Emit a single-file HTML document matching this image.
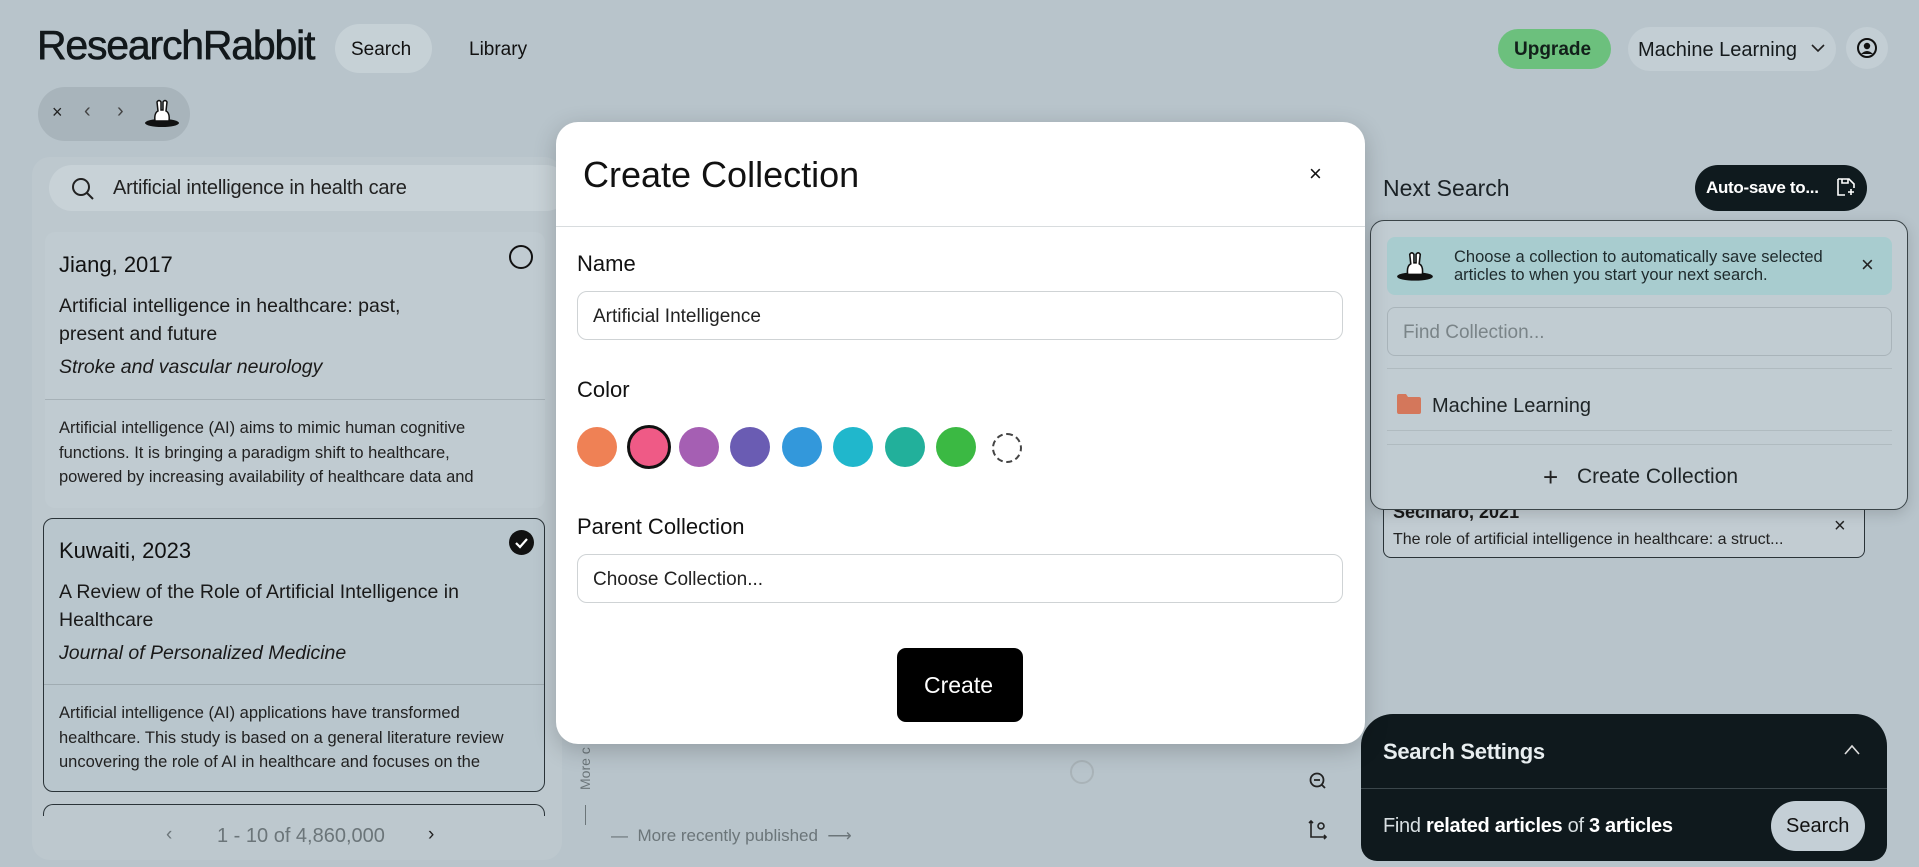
<!DOCTYPE html>
<html><head><meta charset="utf-8"><style>
*{box-sizing:border-box;margin:0;padding:0}
body{width:1919px;height:867px;overflow:hidden;background:#b8c4cb;font-family:"Liberation Sans",sans-serif;color:#111;position:relative}
.a{position:absolute}
.t{white-space:nowrap}
</style></head><body>
<!-- header -->
<div class="a t" style="left:37px;top:22px;font-size:41px;letter-spacing:-1.2px;color:#12181b;font-weight:500;-webkit-text-stroke:0.6px #12181b">ResearchRabbit</div>
<div class="a" style="left:335px;top:24px;width:97px;height:49px;border-radius:25px;background:#c6d1d6"></div>
<div class="a t" style="left:351px;top:39px;font-size:19px;font-weight:500">Search</div>
<div class="a t" style="left:469px;top:39px;font-size:19px;font-weight:500">Library</div>
<div class="a" style="left:38px;top:87px;width:152px;height:54px;border-radius:27px;background:#a8b4bb"></div>
<div class="a t" style="left:52px;top:102px;font-size:18px;color:#222">×</div>
<div class="a t" style="left:84px;top:100px;font-size:20px;color:#444">‹</div>
<div class="a t" style="left:117px;top:100px;font-size:20px;color:#444">›</div>
<svg class="a" style="left:143px;top:99px" width="38" height="30" viewBox="0 0 38 30"><ellipse cx="19" cy="24" rx="17" ry="4" fill="#111"/><path d="M12 22 Q11 14 15 12 L14 3 Q16 0 18 3 L18 11 L20 11 L20 3 Q22 0 24 3 L23 12 Q27 14 26 22Z" fill="#fff" stroke="#111" stroke-width="1.5"/></svg>

<div class="a" style="left:1498px;top:29px;width:113px;height:40px;border-radius:20px;background:#6cc07d"></div>
<div class="a t" style="left:1514px;top:39px;font-size:19px;font-weight:600;color:#12201a">Upgrade</div>
<div class="a" style="left:1628px;top:27px;width:208px;height:44px;border-radius:22px;background:#c3ced4"></div>
<div class="a t" style="left:1638px;top:39px;font-size:20px;color:#151a1c">Machine Learning</div>
<svg class="a" style="left:1810px;top:42px" width="16" height="12"><path d="M2 3 L8 9 L14 3" fill="none" stroke="#222" stroke-width="1.6"/></svg>
<div class="a" style="left:1846px;top:27px;width:42px;height:42px;border-radius:21px;background:#c3ced4"></div>
<svg class="a" style="left:1856px;top:37px" width="22" height="22" viewBox="0 0 22 22"><circle cx="11" cy="11" r="9" fill="none" stroke="#111" stroke-width="2"/><circle cx="11" cy="9" r="3.2" fill="#111"/><path d="M5 17 Q11 11 17 17" fill="#111"/></svg>

<!-- left panel -->
<div class="a" style="left:32px;top:157px;width:530px;height:703px;border-radius:18px;background:#bdc8ce"></div>
<div class="a" style="left:49px;top:165px;width:520px;height:46px;border-radius:23px;background:#c8d2d7"></div>
<svg class="a" style="left:70px;top:176px" width="26" height="26"><circle cx="11" cy="11" r="8" fill="none" stroke="#222" stroke-width="2"/><path d="M17 17 L23 23" stroke="#222" stroke-width="2"/></svg>
<div class="a t" style="left:113px;top:177px;font-size:20px;color:#222;letter-spacing:-0.2px">Artificial intelligence in health care</div>

<div class="a" style="left:45px;top:232px;width:500px;height:276px;border-radius:10px;background:#c0cbd1"></div>
<div class="a t" style="left:59px;top:252px;font-size:22px">Jiang, 2017</div>
<div class="a" style="left:509px;top:245px;width:24px;height:24px;border-radius:12px;border:2px solid #111"></div>
<div class="a" style="left:59px;top:292px;font-size:19.5px;line-height:28px;width:460px;color:#1a1a1a">Artificial intelligence in healthcare: past,<br>present and future</div>
<div class="a t" style="left:59px;top:356px;font-size:19.5px;font-style:italic;color:#1a1a1a">Stroke and vascular neurology</div>
<div class="a" style="left:45px;top:399px;width:500px;height:1px;background:#a6b1b7"></div>
<div class="a" style="left:59px;top:416px;font-size:16.5px;line-height:24.5px;color:#222;width:480px;white-space:nowrap">Artificial intelligence (AI) aims to mimic human cognitive<br>functions. It is bringing a paradigm shift to healthcare,<br>powered by increasing availability of healthcare data and</div>

<div class="a" style="left:43px;top:518px;width:502px;height:274px;border-radius:10px;background:#b9c6cd;border:1.5px solid #2a3338"></div>
<div class="a t" style="left:59px;top:538px;font-size:22px">Kuwaiti, 2023</div>
<div class="a" style="left:509px;top:530px;width:25px;height:25px;border-radius:13px;background:#111"></div>
<svg class="a" style="left:509px;top:530px" width="25" height="25"><path d="M7 13 L11 17 L18 9" fill="none" stroke="#fff" stroke-width="2.2"/></svg>
<div class="a" style="left:59px;top:578px;font-size:19.5px;line-height:28px;color:#1a1a1a;white-space:nowrap">A Review of the Role of Artificial Intelligence in<br>Healthcare</div>
<div class="a t" style="left:59px;top:642px;font-size:19.5px;font-style:italic;color:#1a1a1a">Journal of Personalized Medicine</div>
<div class="a" style="left:44px;top:684px;width:500px;height:1px;background:#a0acb2"></div>
<div class="a" style="left:59px;top:701px;font-size:16.5px;line-height:24.5px;color:#222;white-space:nowrap">Artificial intelligence (AI) applications have transformed<br>healthcare. This study is based on a general literature review<br>uncovering the role of AI in healthcare and focuses on the</div>
<div class="a" style="left:43px;top:804px;width:502px;height:12px;border-radius:10px 10px 0 0;border:1.5px solid #2a3338;border-bottom:none;overflow:hidden"></div>
<div class="a t" style="left:166px;top:824px;font-size:19px;color:#6b7579">‹</div>
<div class="a t" style="left:217px;top:825px;font-size:20px;color:#6b7579">1 - 10 of 4,860,000</div>
<div class="a t" style="left:428px;top:824px;font-size:19px;color:#222">›</div>

<!-- graph area bits -->
<div class="a t" style="left:611px;top:826px;font-size:17px;color:#6b7579">— &nbsp;More recently published &nbsp;⟶</div>
<div class="a" style="left:585px;top:805px;width:1px;height:20px;background:#6b7579"></div>
<div class="a t" style="left:577px;top:790px;font-size:14px;color:#6b7579;transform:rotate(-90deg);transform-origin:left top">More c</div>
<div class="a" style="left:1070px;top:760px;width:24px;height:24px;border-radius:12px;border:2px solid #a9b3b8"></div>
<svg class="a" style="left:1308px;top:771px" width="20" height="20"><circle cx="9" cy="9" r="6.5" fill="none" stroke="#222" stroke-width="1.8"/><path d="M6 9 H12 M14 14 L17 17" stroke="#222" stroke-width="1.8"/></svg>
<svg class="a" style="left:1308px;top:819px" width="20" height="22"><path d="M3 2 V18 H18 M1 4 L3 2 L5 4 M16 16 L18 18 L16 20" fill="none" stroke="#222" stroke-width="1.6"/><circle cx="13" cy="7" r="3" fill="none" stroke="#222" stroke-width="1.6"/></svg>

<!-- right side -->
<div class="a t" style="left:1383px;top:175px;font-size:23px;font-weight:500;color:#1b2226">Next Search</div>
<div class="a" style="left:1695px;top:165px;width:172px;height:46px;border-radius:23px;background:#0f1a1e"></div>
<div class="a t" style="left:1706px;top:178px;font-size:17px;font-weight:600;color:#fff;letter-spacing:-0.3px">Auto-save to...</div>
<svg class="a" style="left:1835px;top:176px" width="22" height="22"><path d="M3 3 H14 L19 8 V12 M3 3 V19 H10 M7 3 V7 H13 V3" fill="none" stroke="#fff" stroke-width="1.6"/><path d="M16 13 V19 M13 16 H19" stroke="#fff" stroke-width="1.6"/></svg>

<div class="a" style="left:1383px;top:500px;width:482px;height:58px;border-radius:8px;background:#c2ccd2;border:1.5px solid #2a3338"></div>
<div class="a t" style="left:1393px;top:502px;font-size:18px;font-weight:600;color:#1a1a1a">Secinaro, 2021</div>
<div class="a t" style="left:1393px;top:531px;font-size:16px;color:#222">The role of artificial intelligence in healthcare: a struct...</div>
<div class="a t" style="left:1834px;top:515px;font-size:20px;color:#222">×</div>

<div class="a" style="left:1370px;top:220px;width:538px;height:290px;border-radius:14px;background:#c1ccd2;border:1.5px solid #3a4448;box-shadow:0 4px 14px rgba(0,0,0,.15)"></div>
<div class="a" style="left:1387px;top:237px;width:505px;height:58px;border-radius:8px;background:#a8cccf"></div>
<svg class="a" style="left:1395px;top:250px" width="40" height="34" viewBox="0 0 38 30"><ellipse cx="19" cy="24" rx="17" ry="4" fill="#111"/><path d="M12 22 Q11 14 15 12 L14 3 Q16 0 18 3 L18 11 L20 11 L20 3 Q22 0 24 3 L23 12 Q27 14 26 22Z" fill="#fff" stroke="#111" stroke-width="1.5"/></svg>
<div class="a t" style="left:1454px;top:248px;font-size:16.5px;line-height:18px;color:#1e2a2c">Choose a collection to automatically save selected<br>articles to when you start your next search.</div>
<div class="a t" style="left:1861px;top:252px;font-size:22px;color:#222">×</div>
<div class="a" style="left:1387px;top:307px;width:505px;height:49px;border-radius:8px;border:1.5px solid #a9b4ba"></div>
<div class="a t" style="left:1403px;top:322px;font-size:19px;color:#7a8488">Find Collection...</div>
<div class="a" style="left:1387px;top:368px;width:505px;height:1px;background:#b0bbc0"></div>
<svg class="a" style="left:1397px;top:394px" width="24" height="20"><path d="M0 2 Q0 0 2 0 H9 L11 3 H22 Q24 3 24 5 V18 Q24 20 22 20 H2 Q0 20 0 18Z" fill="#d4775b"/></svg>
<div class="a t" style="left:1432px;top:395px;font-size:20px;color:#1e2426">Machine Learning</div>
<div class="a" style="left:1387px;top:430px;width:505px;height:1px;background:#b0bbc0"></div>
<div class="a" style="left:1387px;top:444px;width:505px;height:1px;background:#b0bbc0"></div>
<div class="a t" style="left:1543px;top:462px;font-size:26px;font-weight:300;color:#222">+</div>
<div class="a t" style="left:1577px;top:465px;font-size:21px;color:#1e2426">Create Collection</div>

<div class="a" style="left:1361px;top:714px;width:526px;height:147px;border-radius:32px 32px 16px 16px;background:#0f191d"></div>
<div class="a t" style="left:1383px;top:739px;font-size:22px;font-weight:700;color:#e8eef0;letter-spacing:-0.3px">Search Settings</div>
<svg class="a" style="left:1843px;top:743px" width="18" height="14"><path d="M2 11 L9 3 L16 11" fill="none" stroke="#ddd" stroke-width="1.6"/></svg>
<div class="a" style="left:1361px;top:788px;width:526px;height:1px;background:#3b464b"></div>
<div class="a t" style="left:1383px;top:815px;font-size:20px;color:#d8dfe2;letter-spacing:-0.3px">Find <b style="color:#fff">related articles</b> of <b style="color:#fff">3 articles</b></div>
<div class="a" style="left:1771px;top:801px;width:94px;height:50px;border-radius:25px;background:#c4cfd6"></div>
<div class="a t" style="left:1786px;top:815px;font-size:20px;color:#111">Search</div>

<!-- modal -->
<div class="a" style="left:556px;top:122px;width:809px;height:622px;border-radius:22px;background:#fff;box-shadow:0 6px 24px rgba(0,0,0,.2)"></div>
<div class="a t" style="left:583px;top:154px;font-size:36px;color:#111">Create Collection</div>
<div class="a t" style="left:1309px;top:161px;font-size:22px;color:#111">×</div>
<div class="a" style="left:556px;top:226px;width:809px;height:1px;background:#d8dcde"></div>
<div class="a t" style="left:577px;top:251px;font-size:22px;color:#111">Name</div>
<div class="a" style="left:577px;top:291px;width:766px;height:49px;border-radius:10px;border:1.5px solid #cfd3d5"></div>
<div class="a t" style="left:593px;top:306px;font-size:19px;color:#222">Artificial Intelligence</div>
<div class="a t" style="left:577px;top:377px;font-size:22px;color:#111">Color</div>
<div class="a" style="left:577px;top:427px;width:40px;height:40px;border-radius:20px;background:#ef8155"></div>
<div class="a" style="left:627px;top:425px;width:44px;height:44px;border-radius:22px;background:#ef5a86;border:3px solid #111"></div>
<div class="a" style="left:679px;top:427px;width:40px;height:40px;border-radius:20px;background:#a55fb3"></div>
<div class="a" style="left:730px;top:427px;width:40px;height:40px;border-radius:20px;background:#6a5cb3"></div>
<div class="a" style="left:782px;top:427px;width:40px;height:40px;border-radius:20px;background:#3398db"></div>
<div class="a" style="left:833px;top:427px;width:40px;height:40px;border-radius:20px;background:#20b7cc"></div>
<div class="a" style="left:885px;top:427px;width:40px;height:40px;border-radius:20px;background:#22b09b"></div>
<div class="a" style="left:936px;top:427px;width:40px;height:40px;border-radius:20px;background:#3bb943"></div>
<div class="a" style="left:992px;top:433px;width:30px;height:30px;border-radius:15px;border:2.5px dashed #444"></div>
<div class="a t" style="left:577px;top:514px;font-size:22px;color:#111">Parent Collection</div>
<div class="a" style="left:577px;top:554px;width:766px;height:49px;border-radius:10px;border:1.5px solid #cfd3d5"></div>
<div class="a t" style="left:593px;top:569px;font-size:19px;color:#222">Choose Collection...</div>
<div class="a" style="left:897px;top:648px;width:126px;height:74px;border-radius:9px;background:#000"></div>
<div class="a t" style="left:924px;top:672px;font-size:23px;color:#fff">Create</div>
</body></html>
